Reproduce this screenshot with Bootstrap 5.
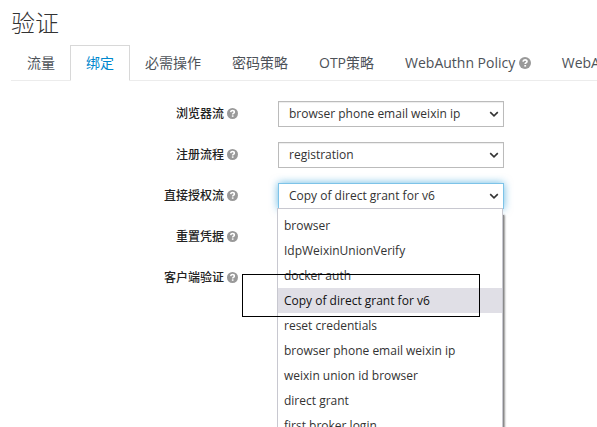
<!DOCTYPE html>
<html lang="zh-CN">
<head>
<meta charset="utf-8">
<meta name="viewport" content="width=device-width, initial-scale=1">
<title>验证</title>
<link href="https://cdn.jsdelivr.net/npm/bootstrap@5.3.0/dist/css/bootstrap.min.css" rel="stylesheet">
<style>
body{font-family:"Open Sans","Noto Sans CJK SC",sans-serif;font-size:12px;color:#333;background:#fff;height:427px}
.page{height:427px;padding:9px 0 0 11px}
.page-title{font-size:24px;font-weight:300;line-height:28px;height:36px;color:#333}
.auth-tabs{border-bottom:1px solid #ececec;width:800px;font-size:14px}
.auth-tabs .nav-item{margin-right:-1px}
.auth-tabs .nav-link{padding:0 15px;height:36px;line-height:34px;color:#4d5258;border-radius:0;white-space:nowrap}
.auth-tabs .nav-link.active{color:#0088ce;border-color:#d8d8d8 #d8d8d8 #fff}
.flow-form{padding-top:20px;width:600px}
.flow-row{height:26px;margin-bottom:15px}
.flow-label{width:227px;font-weight:500;line-height:26px;color:#222}
.help{display:block;width:11px;height:11px;margin-left:3px;margin-bottom:1px}
.auth-tabs .help{width:12px;height:12px;margin-bottom:0;margin-left:3.500px}
.flow-control{margin-left:40px;width:226px;position:relative}
.flow-control .form-select{height:26px;padding:0 28px 0 10px;font-size:12px;line-height:24px;color:#333;border:1px solid #bbb;border-radius:0;box-shadow:inset 0 1px 1px rgba(0,0,0,.075);background-position:right 4px center;background-size:10px 8px;background-image:url("data:image/svg+xml,%3Csvg xmlns='http://www.w3.org/2000/svg' viewBox='0 0 10 8'%3E%3Cpath d='M1.200 2.200l3.800 3.600 3.800-3.600' fill='none' stroke='%23333' stroke-width='1.600'/%3E%3C/svg%3E")}
.flow-control .form-select.is-open{border-color:#7dc3e8;box-shadow:0 0 8px rgba(0,136,206,.6)}
.flow-menu{display:block;top:25px;left:-1px;width:226px;height:300px;padding:4px 0;border:1px solid #c8c8d0;border-radius:0;font-size:12px;overflow:hidden}
.menu-wrap{position:absolute;z-index:5;top:25px;left:-1px;width:226px;height:260px}
.menu-wrap::before{content:"";position:absolute;top:7px;right:-1px;bottom:0;width:3px;background:#8a8a8a;box-shadow:1px 0 2px rgba(0,0,0,.4)}
.menu-wrap .flow-menu{top:0;left:0}
.flow-menu .dropdown-item{padding:0 6px;height:25px;line-height:25px;color:#333}
.flow-menu .dropdown-item.active{background:#e0dfe6;color:#111}
.callout-box{position:absolute;z-index:10;left:242px;top:274px;width:238px;height:43px;border:1px solid #000}
</style>
<script src="https://cdn.jsdelivr.net/npm/bootstrap@5.3.0/dist/js/bootstrap.bundle.min.js"></script>
</head>
<body class="overflow-hidden">
<svg class="d-none" xmlns="http://www.w3.org/2000/svg"><symbol id="q" viewBox="0 0 12 12"><circle cx="6" cy="6" r="6" fill="#999"/><path d="M4 4.600C4.200 3.300 5 2.800 6 2.800s2 .6 2 1.700C8 5.700 6.200 5.600 6.200 7.100" fill="none" stroke="#fff" stroke-width="1.700"/><path d="M5.300 8h1.800v1.600H5.300z" fill="#fff"/></symbol></svg>
<main class="page position-relative overflow-hidden">
<h1 class="page-title m-0">验证</h1>
<ul class="nav nav-tabs auth-tabs flex-nowrap">
<li class="nav-item"><a class="nav-link" href="#">流量</a></li>
<li class="nav-item"><a class="nav-link active" href="#">绑定</a></li>
<li class="nav-item"><a class="nav-link" href="#">必需操作</a></li>
<li class="nav-item"><a class="nav-link" href="#">密码策略</a></li>
<li class="nav-item"><a class="nav-link" href="#">OTP策略</a></li>
<li class="nav-item"><a class="nav-link d-flex align-items-center" href="#">WebAuthn Policy<svg class="help"><use href="#q"/></svg></a></li>
<li class="nav-item"><a class="nav-link" href="#">WebAuthn Passwordless Policy</a></li>
</ul>
<form class="flow-form">
<div class="flow-row d-flex align-items-center"><label class="flow-label d-flex justify-content-end align-items-center">浏览器流<svg class="help"><use href="#q"/></svg></label><div class="flow-control"><select class="form-select"><option>browser phone email weixin ip</option></select></div></div>
<div class="flow-row d-flex align-items-center"><label class="flow-label d-flex justify-content-end align-items-center">注册流程<svg class="help"><use href="#q"/></svg></label><div class="flow-control"><select class="form-select"><option>registration</option></select></div></div>
<div class="flow-row d-flex align-items-center"><label class="flow-label d-flex justify-content-end align-items-center">直接授权流<svg class="help"><use href="#q"/></svg></label><div class="flow-control"><select class="form-select is-open"><option>Copy of direct grant for v6</option></select>
<div class="menu-wrap"><div class="dropdown-menu flow-menu show">
<a class="dropdown-item" href="#">browser</a>
<a class="dropdown-item" href="#">IdpWeixinUnionVerify</a>
<a class="dropdown-item" href="#">docker auth</a>
<a class="dropdown-item active" href="#">Copy of direct grant for v6</a>
<a class="dropdown-item" href="#">reset credentials</a>
<a class="dropdown-item" href="#">browser phone email weixin ip</a>
<a class="dropdown-item" href="#">weixin union id browser</a>
<a class="dropdown-item" href="#">direct grant</a>
<a class="dropdown-item" href="#">first broker login</a>
</div></div></div></div>
<div class="flow-row d-flex align-items-center"><label class="flow-label d-flex justify-content-end align-items-center">重置凭据<svg class="help"><use href="#q"/></svg></label></div>
<div class="flow-row d-flex align-items-center"><label class="flow-label d-flex justify-content-end align-items-center">客户端验证<svg class="help"><use href="#q"/></svg></label></div>
</form>
<div class="callout-box"></div>
</main>
</body>
</html>
